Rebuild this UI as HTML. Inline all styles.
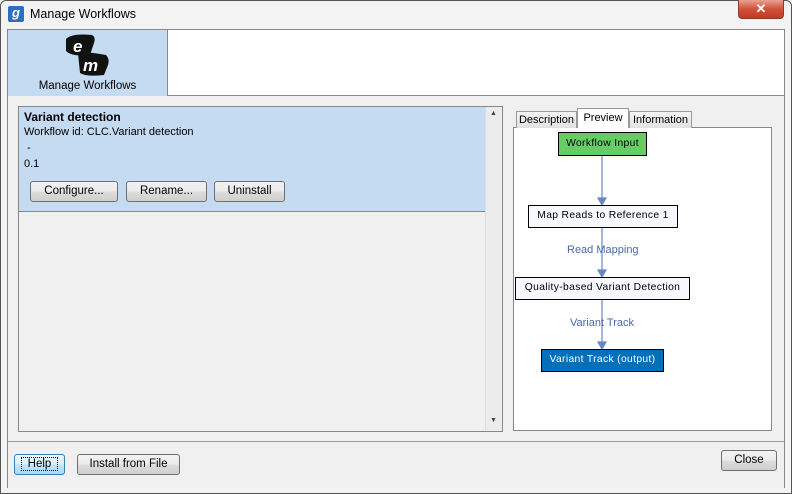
<!DOCTYPE html>
<html><head><style>
*{margin:0;padding:0;box-sizing:border-box}
body{width:792px;height:494px;position:relative;overflow:hidden;background:#f0f0f0;font-family:"Liberation Sans",sans-serif;font-size:12px;color:#000}
.a{position:absolute}
.btn{position:absolute;border:1px solid #707070;border-radius:3px;background:linear-gradient(#f2f2f2,#ebebeb 50%,#dddddd 51%,#cfcfcf);text-align:center;font-size:11.5px;line-height:19px}
.node{position:absolute;border:1px solid #000;background:#f7f8fd;text-align:center;font-size:10.3px;letter-spacing:0.35px;line-height:20px}
.lbl{position:absolute;color:#4a6aa8;font-size:11px}
</style></head><body>
<div class="a" style="left:0;top:0;width:792px;height:494px;border:1px solid #555;border-radius:6px 6px 0 0;background:#f3f3f3"></div>
<div class="a" style="left:8px;top:6px;width:16px;height:16px;background:#2a6fc2;border-radius:2px;color:#fff;font-weight:bold;font-size:13px;line-height:14px;text-align:center;font-style:italic">g</div>
<div class="a" style="left:30px;top:7px;font-size:12.5px">Manage Workflows</div>
<div class="a" style="left:738px;top:0;width:46px;height:19px;border:1px solid #8a3b2e;border-top:none;border-radius:0 0 4px 4px;background:linear-gradient(#e8a393,#d0523a 50%,#c23a22);color:#fff;font-weight:bold;text-align:center;line-height:18px;font-size:13px">✕</div>
<div class="a" style="left:7px;top:29px;width:778px;height:459px;background:#f0f0f0;border:1px solid #888;border-bottom:none"></div>
<div class="a" style="left:8px;top:30px;width:776px;height:66px;background:#fff;border-bottom:1px solid #888"></div>
<div class="a" style="left:8px;top:30px;width:160px;height:66px;background:#c4dbf2;border-right:1px solid #888"></div>
<svg class="a" style="left:62px;top:33px" width="48" height="44" viewBox="0 0 48 44">
<path d="M4 6 Q10 0 30 2 Q34 4 32 10 L28 22 Q10 24 4 18 Z" fill="#111"/>
<path d="M16 20 Q22 18 44 22 Q48 26 46 32 L42 42 Q24 44 18 40 Z" fill="#111"/>
<text x="11" y="19" fill="#fff" font-size="17" font-weight="bold" font-style="italic" font-family="Liberation Sans">e</text>
<text x="21" y="38" fill="#fff" font-size="17" font-weight="bold" font-style="italic" font-family="Liberation Sans">m</text>
</svg>
<div class="a" style="left:8px;top:80px;width:159px;text-align:center;font-size:11.5px">Manage Workflows</div>
<div class="a" style="left:18px;top:106px;width:485px;height:326px;border:1px solid #888;background:#f0f0f0"></div>
<div class="a" style="left:19px;top:107px;width:466px;height:105px;background:#c5dbf2;border-bottom:1px solid #888"></div>
<div class="a" style="left:485px;top:107px;width:17px;height:324px;background:#ececec;border-left:1px solid #ddd"></div>
<div class="a" style="left:490px;top:110px;font-size:7px;color:#444">▲</div>
<div class="a" style="left:490px;top:417px;font-size:7px;color:#444">▼</div>
<div class="a" style="left:24px;top:110px;font-weight:bold">Variant detection</div>
<div class="a" style="left:24px;top:126px;font-size:11px">Workflow id: CLC.Variant detection</div>
<div class="a" style="left:27px;top:142px;font-size:11px">-</div>
<div class="a" style="left:24px;top:158px;font-size:11px">0.1</div>
<div class="btn" style="left:30px;top:181px;width:88px;height:21px">Configure...</div>
<div class="btn" style="left:126px;top:181px;width:81px;height:21px">Rename...</div>
<div class="btn" style="left:214px;top:181px;width:71px;height:21px">Uninstall</div>
<div class="a" style="left:513px;top:127px;width:259px;height:304px;border:1px solid #888;background:#fff"></div>
<div class="a" style="left:516px;top:111px;width:61px;height:17px;border:1px solid #999;border-bottom:none;background:linear-gradient(#f4f4f4,#e2e2e2);text-align:center;font-size:11px;line-height:17px">Description</div>
<div class="a" style="left:577px;top:108px;width:52px;height:20px;border:1px solid #999;border-bottom:none;background:#fff;text-align:center;font-size:11px;line-height:18px">Preview</div>
<div class="a" style="left:629px;top:111px;width:63px;height:17px;border:1px solid #999;border-bottom:none;background:linear-gradient(#f4f4f4,#e2e2e2);text-align:center;font-size:11px;line-height:17px">Information</div>
<svg class="a" style="left:0;top:0" width="792" height="494">
<g stroke="#6a86c6" stroke-width="1.2" fill="#6a86c6">
<line x1="602" y1="155" x2="602" y2="204"/><path d="M598 198 L606 198 L602 205 Z"/>
<line x1="602" y1="227" x2="602" y2="276"/><path d="M598 270 L606 270 L602 277 Z"/>
<line x1="602" y1="299" x2="602" y2="348"/><path d="M598 342 L606 342 L602 349 Z"/>
</g></svg>
<div class="node" style="left:558px;top:132px;width:89px;height:24px;background:#66cc66;line-height:21px">Workflow Input</div>
<div class="node" style="left:528px;top:205px;width:150px;height:23px">Map Reads to Reference 1</div>
<div class="lbl" style="left:567px;top:244px">Read Mapping</div>
<div class="node" style="left:515px;top:277px;width:175px;height:23px">Quality-based Variant Detection</div>
<div class="lbl" style="left:570px;top:317px">Variant Track</div>
<div class="node" style="left:541px;top:349px;width:123px;height:23px;background:#0070bb;color:#fff">Variant Track (output)</div>
<div class="a" style="left:8px;top:441px;width:776px;height:1px;background:#999"></div>
<div class="btn" style="left:14px;top:454px;width:51px;height:21px;border-color:#3c7fb1;background:linear-gradient(#eaf6fd,#d9f0fc 50%,#bee6fd 51%,#a7d9f5)"><span style="outline:1px dotted #000;padding:0 6px">Help</span></div>
<div class="btn" style="left:77px;top:454px;width:103px;height:21px">Install from File</div>
<div class="btn" style="left:721px;top:450px;width:56px;height:21px">Close</div>
</body></html>
